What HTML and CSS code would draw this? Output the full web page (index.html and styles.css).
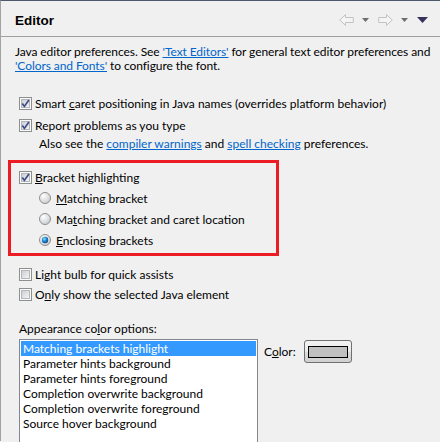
FILE: index.html
```html
<!DOCTYPE html>
<html lang="en">
<head>
<meta charset="utf-8">
<title>Editor</title>
<link rel="stylesheet" href="styles.css">
</head>
<body>
<svg class="defs" width="0" height="0" aria-hidden="true">
  <defs>
    <linearGradient id="cbFill" x1="0" y1="0" x2="1" y2="1">
      <stop offset="0" stop-color="#c9ccd2"/>
      <stop offset="1" stop-color="#f7f7f7"/>
    </linearGradient>
    <radialGradient id="rbFill" cx="0.35" cy="0.3" r="0.8">
      <stop offset="0" stop-color="#ffffff"/>
      <stop offset="1" stop-color="#c6c8cc"/>
    </radialGradient>
    <radialGradient id="rbDot" cx="0.4" cy="0.35" r="0.75">
      <stop offset="0" stop-color="#9ee0ff"/>
      <stop offset="0.45" stop-color="#1d8ad8"/>
      <stop offset="1" stop-color="#0a3568"/>
    </radialGradient>
    <symbol id="cb-on" viewBox="0 0 13 13">
      <rect x="0.5" y="0.5" width="12" height="12" fill="#fbfbfb" stroke="#8e8f8f"/>
      <rect x="2.5" y="2.5" width="8" height="8" fill="url(#cbFill)" stroke="#b3b6bb"/>
      <path d="M3.3 6.4 L5.4 9.4 L9.9 3.1" fill="none" stroke="#3b4d87" stroke-width="1.7"/>
    </symbol>
    <symbol id="cb-off" viewBox="0 0 13 13">
      <rect x="0.5" y="0.5" width="12" height="12" fill="#fbfbfb" stroke="#8e8f8f"/>
      <rect x="2.5" y="2.5" width="8" height="8" fill="url(#cbFill)" stroke="#b3b6bb"/>
    </symbol>
    <symbol id="rb-off" viewBox="0 0 12 12">
      <circle cx="6" cy="6" r="5.5" fill="url(#rbFill)" stroke="#8e8f8f"/>
    </symbol>
    <symbol id="rb-on" viewBox="0 0 12 12">
      <circle cx="6" cy="6" r="5.5" fill="url(#rbFill)" stroke="#8e8f8f"/>
      <circle cx="6" cy="6" r="3.2" fill="url(#rbDot)"/>
    </symbol>
  </defs>
</svg>

<div class="page">
  <div class="header">
    <h1 class="title">Editor</h1>
    <div class="nav">
      <svg class="nav-arrow" width="15" height="12" viewBox="0 0 15 12"><path d="M0.7 6 L6.5 0.7 L6.5 3.5 L14.3 3.5 L14.3 8.5 L6.5 8.5 L6.5 11.3 Z" fill="#f4f4f4" stroke="#c3c3c3"/></svg>
      <svg class="nav-drop" width="7" height="4" viewBox="0 0 7 4"><path d="M0 0 H7 L3.5 4 Z" fill="#6e6e6e"/></svg>
      <svg class="nav-arrow fwd" width="15" height="12" viewBox="0 0 15 12"><path d="M14.3 6 L8.5 0.7 L8.5 3.5 L0.7 3.5 L0.7 8.5 L8.5 8.5 L8.5 11.3 Z" fill="#f4f4f4" stroke="#c3c3c3"/></svg>
      <svg class="nav-drop" width="7" height="4" viewBox="0 0 7 4"><path d="M0 0 H7 L3.5 4 Z" fill="#6e6e6e"/></svg>
      <svg class="nav-menu" width="11" height="6" viewBox="0 0 11 6"><path d="M0 0 H11 L5.5 6 Z" fill="#37315c"/></svg>
    </div>
  </div>

  <div class="content">
    <p class="desc"><span class="line">Java editor preferences. See <a href="#">'Text Editors'</a> for general text editor preferences and</span><br><span class="line"><a href="#">'Colors and Fonts'</a> to configure the font.</span></p>

    <div class="check row-smart"><svg class="box" width="13" height="13"><use href="#cb-on"/></svg><span>Smart <u>c</u>aret positioning in Java names (overrides platform behavior)</span></div>
    <div class="check row-report"><svg class="box" width="13" height="13"><use href="#cb-on"/></svg><span>Report <u>p</u>roblems as you type</span></div>
    <div class="note">Also see the <a href="#">compiler warnings</a> and <a href="#">spell checking</a> preferences.</div>

    <div class="highlight">
      <div class="check"><svg class="box" width="13" height="13"><use href="#cb-on"/></svg><span><u>B</u>racket highlighting</span></div>
      <div class="radio"><svg class="dot" width="12" height="12"><use href="#rb-off"/></svg><span><u>M</u>atching bracket</span></div>
      <div class="radio"><svg class="dot" width="12" height="12"><use href="#rb-off"/></svg><span>Ma<u>t</u>ching bracket and caret location</span></div>
      <div class="radio"><svg class="dot" width="12" height="12"><use href="#rb-on"/></svg><span><u>E</u>nclosing brackets</span></div>
    </div>

    <div class="check row-bulb"><svg class="box" width="13" height="13"><use href="#cb-off"/></svg><span>Li<u>g</u>ht bulb for quick assists</span></div>
    <div class="check row-only"><svg class="box" width="13" height="13"><use href="#cb-off"/></svg><span>O<u>n</u>ly show the selected Java element</span></div>

    <div class="label-appearance">Appearance co<u>l</u>or options:</div>
    <div class="appearance">
      <ul class="listbox">
        <li class="selected">Matching brackets highlight</li>
        <li>Parameter hints background</li>
        <li>Parameter hints foreground</li>
        <li>Completion overwrite background</li>
        <li>Completion overwrite foreground</li>
        <li>Source hover background</li>
      </ul>
      <div class="color-field">
        <span class="color-label">C<u>o</u>lor:</span>
        <button class="color-button" type="button"><span class="swatch"></span></button>
      </div>
    </div>
  </div>
</div>
</body>
</html>
```

FILE: styles.css
```css
html, body {
  margin: 0;
  padding: 0;
}

body {
  width: 440px;
  height: 442px;
  overflow: hidden;
  background: #f0f0f0;
  color: #000;
  font-family: Lato, "Liberation Sans", sans-serif;
  font-size: 12px;
}

.defs {
  position: absolute;
  width: 0;
  height: 0;
  overflow: hidden;
}

.page {
  height: 441px;
  border-top: 1px solid #4f596c;
  border-left: 1px solid #a3a3a3;
  box-sizing: border-box;
}

.header {
  height: 35px;
  border-bottom: 1px solid #a0a0a0;
  display: flex;
  align-items: center;
  justify-content: space-between;
  padding: 0 12px 0 14px;
}

.title {
  margin: 3px 0 0;
  font-family: "Liberation Sans", Arial, sans-serif;
  font-weight: bold;
  font-size: 13.5px;
}

.nav {
  display: flex;
  align-items: center;
  margin-top: 2px;
}

.nav-arrow { display: block; }
.nav-drop { display: block; margin: 1px 9px 0 8px; }
.nav-menu { display: block; margin-top: 1px; }

.content {
  padding: 0 8px 0 14px;
}

a {
  color: #0066cc;
  text-decoration: underline;
}

u {
  text-decoration: underline;
}

.desc {
  margin: 8px 0 0;
  line-height: 14px;
  white-space: nowrap;
  letter-spacing: -0.08px;
}

.check,
.radio {
  display: flex;
  align-items: center;
  height: 16px;
  white-space: nowrap;
}

.check { margin-left: 4px; }

.box { display: block; flex: none; margin-right: 3px; }
.dot { display: block; flex: none; margin-right: 5px; }

.row-smart { margin-top: 22px; }
.row-report { margin-top: 6px; }

.note {
  margin: 3px 0 0 24px;
  height: 16px;
  line-height: 16px;
  white-space: nowrap;
}

.highlight {
  margin: 8px 0 0 -7px;
  width: 271px;
  box-sizing: border-box;
  border: 3px solid #ec1c24;
  padding: 6px 0 5px 8px;
}

.highlight .check { margin-left: 0; }

.radio {
  margin: 5px 0 0 20px;
}

.row-bulb { margin-top: 10px; }
.row-only { margin-top: 4px; }

.label-appearance {
  margin: 19px 0 0 4px;
  height: 16px;
  line-height: 16px;
}

.appearance {
  display: flex;
  align-items: flex-start;
  margin: 2px 0 0 4px;
}

.listbox {
  list-style: none;
  margin: 0;
  padding: 1px;
  width: 239px;
  height: 120px;
  box-sizing: border-box;
  border: 1px solid #828790;
  background: #fff;
  flex: none;
}

.listbox li {
  height: 15px;
  line-height: 15px;
  padding-left: 2px;
  white-space: nowrap;
}

.listbox li.selected {
  background: #3399ff;
  color: #fff;
}

.color-field {
  display: flex;
  align-items: center;
  margin-left: 6px;
  margin-top: 1px;
}

.color-label {
  margin-right: 8px;
}

.color-button {
  width: 48px;
  height: 23px;
  margin: 0;
  padding: 0;
  box-sizing: border-box;
  border: 1px solid #707070;
  border-radius: 3px;
  background: linear-gradient(#f2f2f2 0%, #ebebeb 50%, #dddddd 51%, #cfcfcf 100%);
  display: flex;
  align-items: center;
  justify-content: center;
}

.swatch {
  display: block;
  width: 40px;
  height: 12px;
  box-sizing: border-box;
  border: 1px solid #000;
  background: #c0c0c0;
}
```
